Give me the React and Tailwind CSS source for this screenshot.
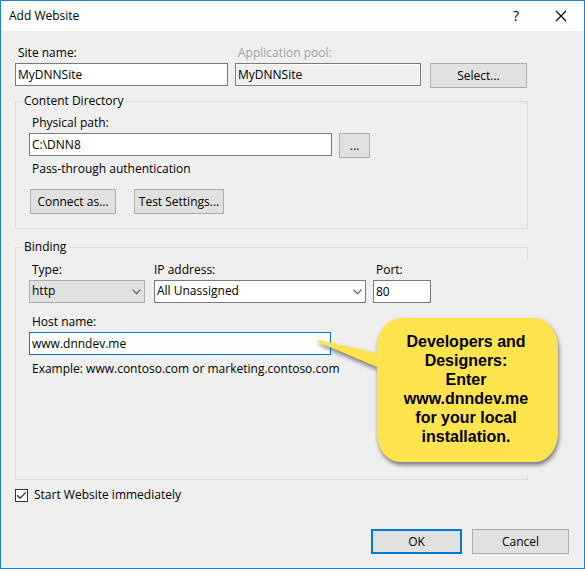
import React, { useState } from "react";
import clsx from "clsx";

const FIELD =
  "block h-[23px] w-full rounded-none border pl-[2px] pb-px text-xs leading-4 text-black outline-none";

function Field({ label, id, className, disabled, focused, defaultValue, children }) {
  return (
    <div className={clsx("flex flex-col gap-[2px]", className)}>
      <label htmlFor={id} className={clsx("pl-[3px] leading-4", disabled && "text-[#a0a0a0]")}>
        {label}
      </label>
      <div className="relative">
        <input
          id={id}
          type="text"
          defaultValue={defaultValue}
          readOnly={disabled}
          className={clsx(
            FIELD,
            disabled ? "bg-[#efefef] shadow-[inset_0_0_0_1px_#fff]" : "bg-white",
            focused ? "border-[#0078d7]" : "border-[#7a7a7a]"
          )}
        />
        {children}
      </div>
    </div>
  );
}

function Select({ label, id, className, option, flat }) {
  return (
    <div className={clsx("flex flex-col gap-[2px]", className)}>
      <label htmlFor={id} className={clsx("leading-4", flat && "pl-[3px]")}>
        {label}
      </label>
      <div className="relative">
        <select
          id={id}
          className={clsx(
            FIELD,
            "appearance-none",
            flat ? "border-[#adadad] bg-[#e1e1e1]" : "border-[#7a7a7a] bg-white"
          )}
        >
          <option>{option}</option>
        </select>
        <svg
          viewBox="0 0 9 6"
          className="pointer-events-none absolute right-1 top-[9px] h-[6px] w-[9px]"
          fill="none"
          stroke="#555"
          strokeWidth="1.1"
          aria-hidden="true"
        >
          <path d="M0.5 0.7 L4.5 4.7 L8.5 0.7" />
        </svg>
      </div>
    </div>
  );
}

function Button({ className, primary, children }) {
  return (
    <button
      type="button"
      className={clsx(
        "h-[25px] shrink-0 bg-[#e1e1e1] text-center text-xs leading-4 text-black",
        primary ? "border-2 border-[#0078d7]" : "border border-[#adadad]",
        className
      )}
    >
      {children}
    </button>
  );
}

function Group({ title, className, children }) {
  return (
    <fieldset className={clsx("relative border border-[#dcdcdc] px-[13px]", className)}>
      <legend className="-ml-[7px] px-[2px] leading-[18px]">{title}</legend>
      {children}
    </fieldset>
  );
}

function Callout() {
  return (
    <div className="pointer-events-none absolute left-[288px] -top-[14px] h-[145px] w-[242px]">
      <svg
        viewBox="0 0 242 145"
        className="absolute inset-0 h-full w-full overflow-visible drop-shadow-[1px_3px_2px_rgba(0,0,0,0.5)]"
        aria-hidden="true"
      >
        <path
          fill="#ffe34f"
          d="M84 0 H218 C231 0 241 14 241 30 V114 C241 131 231 144 218 144 H84 C70 144 60 131 60 114 V49 L1 24 Q-1 22 2 22 L60 35 V30 C60 14 70 0 84 0 Z"
        />
      </svg>
      <p className="relative mr-1 ml-[60px] pt-[14px] text-center text-base leading-[19px] font-bold text-black [font-family:'Liberation_Sans',Arial,sans-serif]">
        Developers and
        <br />
        Designers:
        <br />
        Enter
        <br />
        www.dnndev.me
        <br />
        for your local
        <br />
        installation.
      </p>
    </div>
  );
}

export default function App() {
  const [start, setStart] = useState(true);

  return (
    <div className="flex min-h-screen flex-col border border-[#1883d7] bg-[#efefef] text-xs text-black [font-family:'Segoe_UI','Open_Sans',sans-serif]">
      <header className="flex h-[30px] items-center bg-white pr-[17px] pl-2">
        <h1 className="flex-1">Add Website</h1>
        <button type="button" aria-label="Help" className="mr-[36px] text-sm leading-4">
          ?
        </button>
        <button type="button" aria-label="Close">
          <svg viewBox="0 0 12 12" className="h-3 w-3" stroke="#000" strokeWidth="1.1" aria-hidden="true">
            <path d="M1 1 L11 11 M11 1 L1 11" />
          </svg>
        </button>
      </header>

      <main className="flex flex-1 flex-col pt-[14px] pl-[14px]">
        <div className="mr-[57px] flex items-end gap-[7px]">
          <Field id="site" label="Site name:" defaultValue="MyDNNSite" className="w-[213px]" />
          <Field id="pool" label="Application pool:" defaultValue="MyDNNSite" disabled className="flex-1" />
          <Button className="-mb-[2px] ml-[2px] w-[97px]">Select...</Button>
        </div>

        <Group title="Content Directory" className="mt-[6px] mr-14 pb-[14px]">
          <div className="flex items-end gap-[7px] pt-[5px]">
            <Field id="path" label="Physical path:" defaultValue="C:\DNN8" className="w-[303px]" />
            <Button className="-mb-[2px] w-[31px]">...</Button>
          </div>
          <p className="mt-[5px] pl-[3px] leading-4">Pass-through authentication</p>
          <div className="mt-3 flex gap-[18px] pl-px">
            <Button className="w-[86px]">Connect as...</Button>
            <Button className="w-[90px]">Test Settings...</Button>
          </div>
        </Group>

        <Group title="Binding" className="mt-[9px] mr-14 pb-[102px]">
          <span className="absolute top-[5px] -right-px bottom-1 w-px bg-[#efefef]" />
          <div className="flex pt-[6px]">
            <Select id="type" label="Type:" option="http" flat className="w-[116px]" />
            <Select id="ip" label="IP address:" option="All Unassigned" className="ml-[9px] w-[212px]" />
            <Field id="port" label="Port:" defaultValue="80" className="ml-[7px] w-[58px]" />
          </div>
          <Field
            id="host"
            label="Host name:"
            defaultValue="www.dnndev.me"
            focused
            className="mt-[11px] w-[302px]"
          >
            <Callout />
          </Field>
          <p className="mt-[6px] pl-[3px] leading-4">
            Example: www.contoso.com or marketing.contoso.com
          </p>
        </Group>

        <label className="mt-[7px] flex items-center gap-[6px] self-start leading-4">
          <span className="relative block h-[13px] w-[13px]">
            <input
              type="checkbox"
              checked={start}
              onChange={(e) => setStart(e.target.checked)}
              className="block h-[13px] w-[13px] appearance-none border border-[#333] bg-white"
            />
            {start && (
              <svg
                viewBox="0 0 13 13"
                className="pointer-events-none absolute inset-0 h-[13px] w-[13px]"
                fill="none"
                stroke="#333"
                strokeWidth="1.3"
                aria-hidden="true"
              >
                <path d="M2.2 6.3 L5 9.2 L10.8 3.4" />
              </svg>
            )}
          </span>
          Start Website immediately
        </label>

        <footer className="mt-auto flex justify-end gap-[10px] pr-[15px] pb-[14px]">
          <Button primary className="w-[91px]">
            OK
          </Button>
          <Button className="w-[97px]">Cancel</Button>
        </footer>
      </main>
    </div>
  );
}
